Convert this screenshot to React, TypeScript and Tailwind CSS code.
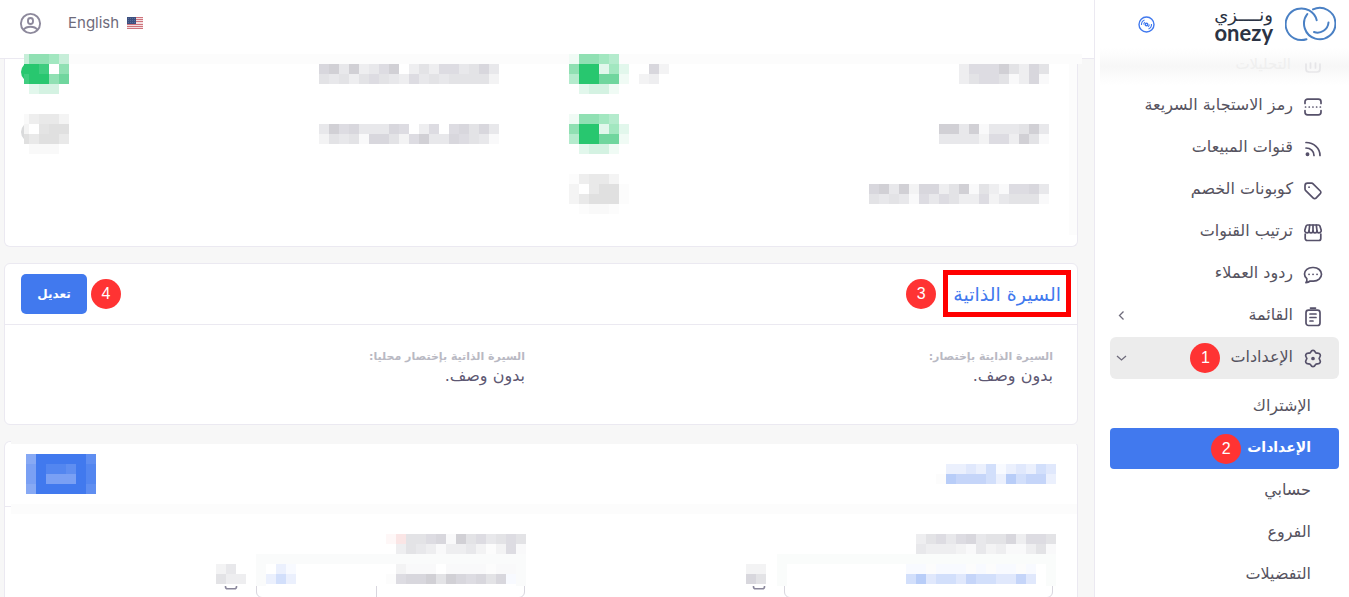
import type { ReactNode } from 'react';

const TONES: Record<string, string> = {
  a: '#d1d0d5', b: '#d8d7dd', c: '#dddce2', d: '#e3e3e6', e: '#e8e8eb', f: '#eeeef0', g: '#f3f3f4', h: '#f9f9fa',
  '1': '#e0e0e0', '2': '#e4e4e4', '3': '#e9e9e9', '4': '#eeeeee', '5': '#f4f4f4', '6': '#f9f9f9', '7': '#fcfcfc', W: '#ffffff',
  A: '#28c76f', B: '#40cd80', C: '#70d69e', D: '#90e0b3', E: '#a2e7c0', F: '#b4ebcd', G: '#c7eed9', H: '#d4f2e2', I: '#e2f7ec', J: '#f0fbf5',
  K: '#4179ee', L: '#5386f0', M: '#5f8ef1', N: '#7aa0f4', O: '#87a9f4', P: '#b8cdf8', Q: '#c5d5f9', R: '#d2dffb', S: '#e0e8fc', T: '#ebf0fd', U: '#f8faff',
  X: '#fae5e5', Y: '#fef7f7',
};

type MosaicProps = { rows: string[]; crop?: number; knob?: string };

/** Censored content: 10px blocks, one letter for each tone. */
function Mosaic({ rows, crop = 0, knob }: MosaicProps) {
  const width = rows[0].length * 10 - crop;
  const height = rows.length * 10;
  const lead = knob ? 3 : 0;
  return (
    <svg
      className="block shrink-0"
      width={width + lead}
      height={height}
      viewBox={`${crop - lead} 0 ${width + lead} ${height}`}
      shapeRendering="crispEdges"
      aria-hidden="true"
    >
      {knob && <circle cx={crop + 7} cy="18" r="10" fill={knob} shapeRendering="auto" />}
      {rows.map((row, y) =>
        row.split('').map((tone, x) => {
          if (tone === '.') return null;
          const left = Math.max(x * 10, crop);
          return <rect key={`${x}-${y}`} x={left} y={y * 10} width={x * 10 + 10 - left} height="10" fill={TONES[tone]} />;
        }),
      )}
    </svg>
  );
}

const GREEN = ['JDDEF.', 'DAAIEI', 'FAACCJ', '.IHHJ.'];
const GREY = ['74335.', '5W3117', '531117', '.7667.'];
const GREEN_EDGE = ['GDDEG', 'AABWD', 'BAADC', 'WIHHW'];
const GREY_EDGE = ['64335', '5W211', '13113', 'W666W'];

function Badge({ children }: { children: ReactNode }) {
  return (
    <span className="flex size-[30px] shrink-0 items-center justify-center rounded-full bg-[#ff3333] font-['Liberation_Sans',sans-serif] text-base font-normal text-white">
      {children}
    </span>
  );
}

function Icon({ children }: { children: ReactNode }) {
  return (
    <svg
      className="mt-0.5 size-5 shrink-0"
      viewBox="0 0 20 20"
      fill="none"
      stroke="#56516a"
      strokeWidth="1.7"
      strokeLinecap="round"
      strokeLinejoin="round"
      aria-hidden="true"
    >
      {children}
    </svg>
  );
}

const icons = {
  chart: <path d="M3 9v5a3 3 0 0 0 3 3h8a3 3 0 0 0 3-3V9M7.5 8v5M12.5 8v5" />,
  qr: (
    <>
      <path d="M2 6.5V4.8A2.6 2.6 0 0 1 4.6 2.2h10.8A2.6 2.6 0 0 1 18 4.8v1.7M2 13.5v1.7a2.6 2.6 0 0 0 2.6 2.6h10.8a2.6 2.6 0 0 0 2.6-2.6v-1.7" />
      <path d="M2.5 10h.1M6.2 10h.1M9.9 10h.1M13.6 10h.1M17.3 10h.1" />
    </>
  ),
  feed: (
    <>
      <path d="M3 3.5c8 0 14 6 14 13M3 9c4.6 0 8 3.4 8 7.5" />
      <circle cx="4.5" cy="15.3" r="1.1" fill="#56516a" />
    </>
  ),
  tag: (
    <>
      <path d="M2 4.7A2.5 2.5 0 0 1 4.5 2.2h4.2a2 2 0 0 1 1.4.6l7.2 7.2a1.9 1.9 0 0 1 0 2.7l-4.3 4.4a1.9 1.9 0 0 1-2.7 0L2.7 9.6A2.3 2.3 0 0 1 2 8z" />
      <path d="M6 6.2h.1" />
    </>
  ),
  store: (
    <>
      <path d="M4.500 2h11a1.500 1.500 0 0 1 1.400 1L18.200 7.200c.2 1.500-.8 2.600-2.200 2.600s-2-.9-2-1.900c0 1-.9 1.900-2 1.900s-2-.9-2-1.900c0 1-.9 1.900-2 1.900s-2-.9-2-1.900c0 1-.7 1.900-2 1.900-1.400 0-2.400-1.100-2.200-2.600L3.100 3A1.500 1.500 0 0 1 4.500 2z" />
      <path d="M6.700 2.200 6 8M10 2.200V8M13.300 2.200 14 8M2.200 11v4.500a2 2 0 0 0 2 2h11.600a2 2 0 0 0 2-2V11" />
    </>
  ),
  chat: (
    <>
      <path d="M10.500 2.500h-1C5 2.500 1.500 5.300 1.500 9c0 2.200 1 3.600 2.300 4.700.3 1.300-.1 3-.9 4 2.200-.1 3.500-1 4.300-1.700 1 .1 2 .1 3.300.1 4.500 0 8-3.100 8-6.800s-3.500-6.800-8-6.800z" />
      <path d="M6 9.300h.1M10 9.300h.1M14 9.300h.1" />
    </>
  ),
  clipboard: (
    <>
      <rect x="3" y="3.2" width="14" height="15.3" rx="2.5" />
      <path d="M7.500 1.100h5M7 7h6M7 10.500h6M7 14h3" />
    </>
  ),
  gear: (
    <>
      <path d="M10 1.400c1.300 0 1.900.8 2.300 1.700.4.900.9 1.200 1.900 1.100 1.200-.1 2.300.1 2.900 1.200s.2 2-.4 2.800c-.7.8-.7 1.700 0 2.600.6.800 1 1.700.4 2.800s-1.700 1.300-2.900 1.200c-1-.1-1.500.2-1.900 1.100-.4.900-1 1.700-2.300 1.700s-1.900-.8-2.300-1.700c-.4-.9-.9-1.200-1.900-1.100-1.200.1-2.300-.1-2.900-1.200s-.2-2 .4-2.800c.7-.9.7-1.800 0-2.600-.6-.8-1-1.700-.4-2.800s1.700-1.300 2.900-1.200c1 .1 1.500-.2 1.900-1.100.4-.9 1-1.700 2.300-1.700z" />
      <circle cx="10" cy="9.500" r="1" fill="#56516a" />
    </>
  ),
};

function Chevron({ down = false }: { down?: boolean }) {
  return (
    <svg className="ms-auto size-3 shrink-0" viewBox="0 0 12 12" fill="none" stroke="#6e6b7b" strokeWidth="1.3" aria-hidden="true">
      <path d={down ? 'M1 4l4.500 4L10 4' : 'M7.500 1.500L3.500 5.500l4 4'} />
    </svg>
  );
}

const links: { label: string; icon: ReactNode; more?: boolean }[] = [
  { label: 'رمز الاستجابة السريعة', icon: icons.qr },
  { label: 'قنوات المبيعات', icon: icons.feed },
  { label: 'كوبونات الخصم', icon: icons.tag },
  { label: 'ترتيب القنوات', icon: icons.store },
  { label: 'ردود العملاء', icon: icons.chat },
  { label: 'القائمة', icon: icons.clipboard, more: true },
];

function Sidebar() {
  const row = 'flex h-[42px] items-center gap-[10px] rounded-md pe-[6px] ps-4';
  return (
    <aside className="flex w-[255px] shrink-0 flex-col overflow-hidden border-e border-[#ebe9f1] bg-white">
      <div className="z-10 flex h-12 shrink-0 items-center bg-white pe-5 ps-[13px]">
        <a href="#home" className="flex items-center gap-3 text-[#2b3344]">
          <svg className="h-[38px] w-[51px]" viewBox="0 0 51 38" fill="none" stroke="#4a80c4" strokeWidth="2" strokeLinecap="round" aria-hidden="true">
            <path d="M21.5 34.2A15.8 15.8 0 1 1 31.7 15.2" />
            <path d="M28 4.400A15.700 15.700 0 1 1 22.300 9" />
            <path d="M43.500 17.500A11 11 0 0 1 29 27" />
          </svg>
          <span className="flex flex-col items-start">
            <span className="text-[18px] leading-[18px]">ونــــزي</span>
            <span dir="ltr" className="font-['Lato',sans-serif] text-[22px] font-bold leading-[18px]">onezy</span>
          </span>
        </a>
        <button type="button" aria-label="Toggle menu" className="ms-auto me-[23px]">
          <svg className="size-[17px]" viewBox="0 0 17 17" fill="none" stroke="#4179ee" strokeWidth="1.4" aria-hidden="true">
            <circle cx="8.5" cy="8.5" r="7.5" />
            <circle cx="8.5" cy="8.5" r="1.3" />
            <path d="M3.500 9a5 5 0 0 1 3-5M13.500 8a5 5 0 0 1-3 5M5.700 8.500a3 3 0 0 1 1.300-2.400M11.300 8.500a3 3 0 0 1-1.300 2.400" strokeWidth="1.1" />
          </svg>
        </button>
      </div>
      <nav className="pe-[15px] ps-[10px]">
        <div className="-mx-[10px] flex h-[37px] items-start bg-gradient-to-b from-white via-[#f7f7f7] to-white ps-[26px] pt-1">
          <a href="#analytics" className="flex items-center gap-3 text-[15px] leading-6 text-[#efefef]">
            <span className="opacity-10"><Icon>{icons.chart}</Icon></span>
            التحليلات
          </a>
        </div>
        {links.map((item) => (
          <a key={item.label} href="#section" className={row}>
            <Icon>{item.icon}</Icon>
            <span className="pb-[3px]">{item.label}</span>
            {item.more && <Chevron />}
          </a>
        ))}
        <a href="#settings" className={`${row} bg-[#ececec]`}>
          <Icon>{icons.gear}</Icon>
          <span className="pb-[3px]">الإعدادات</span>
          <Badge>1</Badge>
          <Chevron down />
        </a>
        <div className="mt-[7px] flex flex-col gap-px">
          <a href="#subscription" className="flex h-[41px] items-center pb-0.5 ps-7">الإشتراك</a>
          <a href="#general" className="flex h-[41px] items-center gap-1.5 rounded bg-[#4179ee] ps-7 text-[14px] font-bold text-white">
            <span className="pb-0.5">الإعدادات</span>
            <Badge>2</Badge>
          </a>
          <a href="#account" className="flex h-[41px] items-center pb-0.5 ps-7">حسابي</a>
          <a href="#branches" className="flex h-[41px] items-center pb-0.5 ps-7">الفروع</a>
          <a href="#preferences" className="flex h-[41px] items-center pb-0.5 ps-7">التفضيلات</a>
        </div>
      </nav>
    </aside>
  );
}

function Flag() {
  return (
    <svg className="h-3 w-4" viewBox="0 0 16 12" shapeRendering="crispEdges" aria-hidden="true">
      <rect width="16" height="12" fill="#f3dfe1" />
      {[0, 2, 4, 7, 9, 11].map((y) => (
        <rect key={y} y={y} width="16" height="1" fill="#cf737c" />
      ))}
      <rect width="9" height="7" fill="#3c5080" />
      {[1, 3, 5].map((y) => (
        <path key={y} d={`M1 ${y}.5h7`} stroke="#5a6c98" strokeWidth="1" strokeDasharray="1 1" />
      ))}
    </svg>
  );
}

function SwitchRow({ label, toggle, extra }: { label: string[]; toggle: ReactNode; extra?: string[] }) {
  return (
    <div className="flex h-[60px] items-start">
      <span className="pt-[10px]"><Mosaic rows={label} /></span>
      <span className="ms-auto flex gap-[10px]">
        {extra && <span className="pt-[10px]"><Mosaic rows={extra} /></span>}
        <button type="button" aria-label="Toggle" className="block">{toggle}</button>
      </span>
    </div>
  );
}

function Fact({ label, value }: { label: string; value: string }) {
  return (
    <div className="px-4">
      <dt className="text-[11px] font-bold leading-[18px] text-[#b9b9c3]">{label}</dt>
      <dd className="leading-5 text-[#5e5873]">{value}</dd>
    </div>
  );
}

function CopyEdge() {
  return (
    <svg className="h-1 w-3.5" viewBox="0 0 14 4" fill="none" stroke="#8a879b" strokeWidth="1.6" aria-hidden="true">
      <path d="M1.500 0v.8a2 2 0 0 0 2 2h7a2 2 0 0 0 2-2V0" />
    </svg>
  );
}

const card = 'rounded-md border border-[#ebe9f1] bg-white';

export default function App() {
  return (
    <div dir="rtl" className="flex h-screen overflow-hidden bg-[#f7f7f7] font-['DejaVu_Sans',sans-serif] text-base text-[#565360]">
      <Sidebar />
      <div className="flex min-w-0 flex-1 flex-col">
        <header className="flex h-[59px] shrink-0 items-start justify-end gap-[26px] border-b border-[#ebe9f1] bg-white pe-[19px] pt-[11px]">
          <button type="button" className="flex h-6 items-center gap-2 font-['Inter',sans-serif] text-[15px] text-[#6e6b7b]">
            <Flag />
            English
          </button>
          <button type="button" aria-label="Account" className="flex h-6 items-center">
            <svg className="size-[23px]" viewBox="0 0 23 23" fill="none" stroke="#8d899c" strokeWidth="1.9" aria-hidden="true">
              <circle cx="11.5" cy="11.5" r="9.6" />
              <rect x="9" y="6" width="5" height="6" rx="2.5" />
              <path d="M4.500 17.800c1.500-2 4-3 7-3s5.500 1 7 3" />
            </svg>
          </button>
        </header>
        <main className="flex flex-1 flex-col gap-4 pe-1 ps-4">
          <section className="relative h-[188px] shrink-0 rounded-b-md border-x border-b border-[#ebe9f1] bg-white">
            <div className="absolute -start-[5px] end-[19px] -top-[5px] h-[10px] bg-[#fcfcfc]" />
            <div className="absolute start-0 top-0 h-[176px] w-[8px] bg-[#fcfcfc]" />
            <div className="relative -mt-[5px] grid grid-cols-[240fr_239fr] gap-x-[70px] pe-4 ps-7">
              <SwitchRow label={['fcccadfbd', 'fdccdhfbh']} toggle={<Mosaic rows={GREEN} />} extra={['.bg', 'gf.']} />
              <SwitchRow label={['baeafeca.fdfccedbe', 'dedfdcdefcededdddg']} toggle={<Mosaic rows={GREEN_EDGE} crop={5} knob="#28c76f" />} />
              <SwitchRow label={['aaeaheeedae', 'eeeegccfadh']} toggle={<Mosaic rows={GREEN} />} />
              <SwitchRow label={['eacbeeebc.fc.cbdbe', 'gdedhbbdgcaeebcdeh']} toggle={<Mosaic rows={GREY_EDGE} crop={5} knob="#d9dadb" />} />
              <SwitchRow label={['baeagbbfdahdfhccbe', 'dedehcecdffcgedddh']} toggle={<Mosaic rows={GREY} />} />
            </div>
          </section>

          <section className={`${card} shrink-0`}>
            <div className="flex h-[61px] items-center border-b border-[#ebe9f1] px-4">
              <h2 className="relative me-[17px] text-[19px] leading-[27px] text-[#4179ee]">
                السيرة الذاتية
                <span className="absolute -inset-x-[10px] -bottom-[9px] -top-[11px] border-[5px] border-[#ff0000]" />
              </h2>
              <Badge>3</Badge>
              <span className="ms-auto"><Badge>4</Badge></span>
              <button type="button" className="ms-1 h-10 w-[66px] rounded-[5px] bg-[#4179ee] text-[12px] font-bold text-white">تعديل</button>
            </div>
            <dl className="grid h-[99px] grid-cols-2 px-2 pt-[23px]">
              <Fact label="السيرة الذايتة بإختصار:" value="بدون وصف." />
              <Fact label="السيرة الذاتية بإختصار محليا:" value="بدون وصف." />
            </dl>
          </section>

          <section className="relative shrink-0 rounded-t-md border-x border-t border-[#ebe9f1] bg-white">
            <div className="absolute -top-px end-[6px] start-0 h-[3px] bg-[#f7f7f7]" />
            <div className="flex h-[65px] items-center border-b border-[#ebe9f1] pe-[21px] ps-[21px]">
              <Mosaic rows={['.TTSTRUTSTRS', '7PQQQRTPRQQT']} />
              <button type="button" aria-label="Edit" className="ms-auto">
                <Mosaic rows={['OKKKKKM', 'NKLLMKL', 'NKNNNKL', 'OKKKKKM']} />
              </button>
            </div>
            <div className="absolute end-[6px] start-0 top-[62px] h-[10px] bg-[#fcfcfc]" />
            <div className="grid h-[110px] grid-cols-2 px-2 pt-[27px]">
              <div className="px-[13px]">
                <Mosaic rows={['fdcecbeddbfccd', 'efffghegfhhfdh']} />
                <div className="flex gap-[18px] ps-[3px]">
                  <div className="relative h-11 w-[269px] rounded-md border border-[#d8d6de]">
                    <div className="absolute -end-2 -start-1 -top-px h-8 border-x-[10px] border-t-[10px] border-[#fafcfb] bg-white ps-[10px]">
                      <Mosaic rows={['UU7UUU7U7UU7U', 'RPSRRSQRRSSQS']} />
                    </div>
                  </div>
                  <div className="flex flex-col items-start gap-0.5 pt-[10px]">
                    <Mosaic rows={['gg', 'bd']} />
                    <CopyEdge />
                  </div>
                </div>
              </div>
              <div className="px-[13px]">
                <div className="ps-[2px]"><Mosaic rows={['YXddcbhadcedcd', '.fdefhffeg7gch']} /></div>
                <div className="flex gap-[10px] ps-[3px]">
                  <div className="relative flex h-11 w-[269px] rounded-md border border-[#d8d6de]">
                    <div className="h-full w-[148px] border-e border-[#d8d6de]" />
                    <div className="absolute -end-px -start-0.5 -top-px flex h-8 items-start border-x-[10px] border-t-[10px] border-[#fafbfb] bg-white">
                      <Mosaic rows={['.ghhh.hhhh7hh', '7cbbadabcbdbU']} />
                      <span className="ms-auto"><Mosaic rows={['.TU', 'TRT']} /></span>
                    </div>
                  </div>
                  <div className="flex flex-col items-start gap-0.5 pt-[10px]">
                    <Mosaic rows={['ge.', 'dff']} />
                    <span className="ps-2"><CopyEdge /></span>
                  </div>
                </div>
              </div>
            </div>
          </section>
        </main>
      </div>
    </div>
  );
}
